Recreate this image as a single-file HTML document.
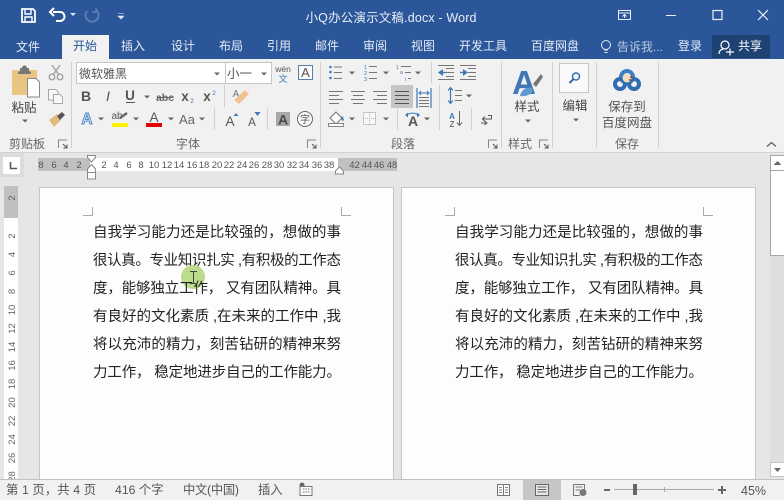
<!DOCTYPE html>
<html lang="zh-CN"><head><meta charset="utf-8"><title>Word</title>
<style>
html,body{margin:0;padding:0;width:784px;height:500px;overflow:hidden;background:#e6e6e6}
svg{display:block}
text{font-family:"Liberation Sans","Noto Sans CJK SC",sans-serif;fill:#444}
.cjk{font-size:12px;text-anchor:middle}
.tab{font-size:12px;text-anchor:middle;fill:#e6ecf5}
.doc{font-size:14.5px;fill:#222}
.hr{font-size:9.5px;text-anchor:middle;fill:#555}
.vr{font-size:9.5px;text-anchor:middle;fill:#666}
.st{font-size:12.3px;fill:#555}
.l{stroke:#777;stroke-width:1;fill:none}
.sep{stroke:#d0d0d0;stroke-width:1}
</style></head><body>
<svg xmlns="http://www.w3.org/2000/svg" width="784" height="500" viewBox="0 0 784 500">
<defs>
<path id="arrow" d="M-3 -1.500H3L0 1.500Z" fill="#666"/>
<g id="launch"><path d="M-4.500 4V-4H4" fill="none" stroke="#888"/><path d="M0 0L4 4M4 .5V4H.5" fill="none" stroke="#555"/></g>
</defs>
<!-- base -->
<rect width="784" height="500" fill="#e6e6e6"/>
<rect width="784" height="59" fill="#2b579a"/>
<rect y="59" width="784" height="93" fill="#f1f1f1"/>
<rect y="152" width="784" height="1" fill="#d2d2d2"/>

<!-- QAT -->
<g fill="none" stroke="#fff" stroke-width="1.800">
<path d="M22 9H33L35 11V22H22Z"/>
<path d="M25 9V14H31V9" stroke-width="1.400"/>
<path d="M25 22V17H32V22" stroke-width="1.400"/>
<path d="M53 12H60C66 12 66 21 60 21H56" stroke-width="2"/>
<path d="M54 8L50 12L54 16" stroke-width="2"/>
<path d="M96 10A6.500 6.500 0 1 1 87 11" stroke="#5f80b3" stroke-width="1.800"/>
<path d="M96 8V12H92" stroke="#5f80b3" stroke-width="1.400"/>
</g>
<path d="M70 13H76L73 16Z" fill="#dfe7f2"/>
<path d="M118 13.500H124M118 16H124L121 19Z" fill="#dfe7f2" stroke="#dfe7f2" stroke-width=".6"/>
<text x="391" y="22" font-size="12.500" text-anchor="middle" style="fill:#e9eef6" textLength="171">小Q办公演示文稿.docx - Word</text>

<!-- window controls -->
<g fill="none" stroke="#e9eef6" stroke-width="1">
<rect x="618.500" y="10.500" width="12" height="9"/><path d="M618.500 13H630.500M624.500 18V15M622.500 16.500L624.500 14.500L626.500 16.500"/>
<path d="M666 15.500H676"/>
<rect x="713" y="10.500" width="9" height="9" stroke-width="1.200"/>
<path d="M758 10L768 20M768 10L758 20" stroke-width="1.200"/>
</g>

<!-- tabs -->
<rect x="62" y="35" width="47" height="24" fill="#f1f1f1"/>
<text class="tab" x="28" y="51">文件</text>
<text class="tab" x="85" y="50" style="fill:#2b579a">开始</text>
<text class="tab" x="133" y="50">插入</text>
<text class="tab" x="183" y="50">设计</text>
<text class="tab" x="231" y="50">布局</text>
<text class="tab" x="279" y="50">引用</text>
<text class="tab" x="327" y="50">邮件</text>
<text class="tab" x="375" y="50">审阅</text>
<text class="tab" x="423" y="50">视图</text>
<text class="tab" x="483" y="50">开发工具</text>
<text class="tab" x="555" y="50">百度网盘</text>
<g fill="none" stroke="#dfe7f2" stroke-width="1"><circle cx="606" cy="45" r="4.500"/><path d="M604 50H608M604.500 52.500H607.500"/></g>
<text class="tab" x="640" y="51" style="fill:#b9c9df">告诉我...</text>
<text class="tab" x="690" y="50">登录</text>
<rect x="712" y="35" width="58" height="23" fill="#1e4273"/>
<g fill="none" stroke="#fff" stroke-width="1.200"><circle cx="725" cy="45" r="4"/><path d="M719 54C719 51 721 49.500 723 49M726 52H734M730 48.500V55.500"/></g>
<text class="tab" x="750" y="50" style="fill:#fff">共享</text>

<!-- group separators -->
<g class="sep">
<path d="M71.500 62V148M320.500 62V148M501.500 62V148M552.500 62V148M596.500 62V148M658.500 62V148"/>
<path d="M224.500 85V107M214.500 108V130M267.500 108V130M431.500 62V83M439.500 85V130M397.500 108V130M471.500 108V130"/>
</g>

<!-- clipboard -->
<rect x="12" y="70" width="25" height="25" rx="1" fill="#e9c583"/>
<path d="M20 71V68H22A2.500 2.500 0 0 1 27 68H29V71L31 72V74H18V72Z" fill="#777"/>
<path d="M27.500 78.500H36L39.500 82V97H27.500Z" fill="#fff" stroke="#888"/>
<text class="cjk" x="24" y="112" style="font-size:12.500px">粘贴</text>
<use href="#arrow" x="25" y="121"/>
<text class="cjk" x="27" y="148" style="fill:#666">剪贴板</text>
<use href="#launch" x="63" y="144"/>
<!-- scissors -->
<g fill="none" stroke="#a3a3a3" stroke-width="1.400"><circle cx="52" cy="77" r="2.800"/><circle cx="60" cy="77" r="2.800"/><path d="M53 75L60 65M59 75L52 65"/></g>
<!-- copy -->
<g fill="#f8f8f8" stroke="#a8a8a8"><path d="M48.500 89.500H56L58 92V100H48.500Z"/><path d="M53.500 94.500H60L62.500 97V103.500H53.500Z"/></g>
<!-- painter -->
<path d="M49 120L57 114L61 120L54 127Z" fill="#e0bb80"/>
<path d="M57 116L62 112L65 115L60 120Z" fill="#555"/>

<!-- font boxes -->
<rect x="76.500" y="62.500" width="149" height="21" fill="#fff" stroke="#c6c6c6"/>
<rect x="225.500" y="62.500" width="46" height="21" fill="#fff" stroke="#c6c6c6"/>
<text x="79" y="78" font-size="12" style="fill:#555">微软雅黑</text>
<use href="#arrow" x="217" y="74"/>
<text x="227" y="78" font-size="12.500" style="fill:#555">小一</text>
<use href="#arrow" x="264" y="74"/>
<text x="283" y="72" font-size="8.500" text-anchor="middle" style="fill:#555">wén</text>
<text x="283" y="82" font-size="9" text-anchor="middle" style="fill:#3f78b5">文</text>
<rect x="298.500" y="65.500" width="14" height="14" fill="#fbfbfb" stroke="#5b7ea8"/>
<text x="305.500" y="77" font-size="13" text-anchor="middle" style="fill:#555">A</text>

<!-- font row 2 -->
<text x="86" y="101" font-size="14" font-weight="700" text-anchor="middle" style="fill:#555">B</text>
<text x="108" y="101" font-size="14" font-style="italic" text-anchor="middle" style="fill:#555">I</text>
<text x="130" y="100" font-size="13.500" font-weight="700" text-anchor="middle" style="fill:#555">U</text>
<path d="M126 102.500H135" stroke="#555"/>
<use href="#arrow" x="147" y="97"/>
<text x="165" y="101" font-size="10.500" font-weight="700" text-anchor="middle" style="fill:#666">abc</text>
<path d="M157 97.500H173.500" stroke="#666"/>
<text x="185" y="101" font-size="13.500" font-weight="700" text-anchor="middle" style="fill:#555">x</text>
<text x="192" y="103" font-size="6.500" text-anchor="middle" style="fill:#3f78b5">2</text>
<text x="207" y="101" font-size="13.500" font-weight="700" text-anchor="middle" style="fill:#555">x</text>
<text x="214" y="95" font-size="6.500" text-anchor="middle" style="fill:#3f78b5">2</text>
<!-- eraser -->
<text x="236" y="97" font-size="10" text-anchor="middle" style="fill:#777">A</text>
<path d="M234 100L245 90L249 94L239 104Z" fill="#efc491"/>
<path d="M245 88L251 84L254 88L249 92Z" fill="#f6e8f1"/>

<!-- font row 3 -->
<text x="87" y="124" font-size="15.500" font-weight="700" text-anchor="middle" style="fill:#cfe0f3;stroke:#4f86c0;stroke-width:.9">A</text>
<use href="#arrow" x="101" y="119"/>
<text x="117" y="119" font-size="10" text-anchor="middle" style="fill:#555">ab</text>
<path d="M120 118L127 113" stroke="#666" stroke-width="2.500"/>
<rect x="112" y="123" width="16" height="4" fill="#fff200"/>
<use href="#arrow" x="136" y="119"/>
<text x="154" y="122" font-size="13.500" text-anchor="middle" style="fill:#555">A</text>
<rect x="146" y="123" width="16" height="4" fill="#e00000"/>
<use href="#arrow" x="171" y="119"/>
<text x="187" y="124" font-size="13" text-anchor="middle" style="fill:#666">Aa</text>
<use href="#arrow" x="202" y="119"/>
<text x="230" y="126" font-size="13.500" text-anchor="middle" style="fill:#555">A</text>
<path d="M233.500 116L236 113L238.500 116Z" fill="#3f78b5"/>
<text x="252" y="126" font-size="11.500" text-anchor="middle" style="fill:#555">A</text>
<path d="M254.500 112H260.500L257.500 116Z" fill="#3f78b5"/>
<rect x="276" y="112" width="14" height="14" fill="#a8a8a8"/>
<text x="283" y="124.500" font-size="14" font-weight="700" text-anchor="middle" style="fill:#4a4a4a">A</text>
<circle cx="305" cy="119" r="7.500" fill="#fbfbfb" stroke="#666"/>
<text x="305" y="123" font-size="10" text-anchor="middle" style="fill:#555">字</text>
<text class="cjk" x="188" y="148" style="fill:#666">字体</text>
<use href="#launch" x="312" y="144"/>

<!-- paragraph row 1 -->
<g fill="#3f78b5"><circle cx="330.500" cy="67" r="1.300"/><circle cx="330.500" cy="72" r="1.300"/><circle cx="330.500" cy="78" r="1.300"/></g>
<path d="M334 67H342M334 72.500H342M334 78.500H342" class="l"/>
<use href="#arrow" x="352" y="73"/>
<g font-size="5.500"><text x="364" y="69" style="fill:#3f78b5">1</text><text x="364" y="75" style="fill:#3f78b5">2</text><text x="364" y="81" style="fill:#3f78b5">3</text></g>
<path d="M369 66.500H377M369 72.500H377M369 78.500H377" class="l"/>
<use href="#arrow" x="386" y="73"/>
<g font-size="5"><text x="396" y="69" style="fill:#3f78b5">1</text><text x="400" y="74" style="fill:#3f78b5">a</text><text x="405" y="81" style="fill:#3f78b5">i</text></g>
<path d="M401 66.500H411M405 72.500H411M408 78.500H411" class="l"/>
<use href="#arrow" x="418" y="73"/>
<path d="M446 68.500H454M446 72.500H454M446 76.500H454M438 65.500H454M438 79.500H454" class="l"/>
<path d="M438 72.500L443 69V76Z" fill="#3f78b5"/><path d="M441 72.500H446" stroke="#3f78b5" stroke-width="1.400"/>
<path d="M468 68.500H476M468 72.500H476M468 76.500H476M460 65.500H476M460 79.500H476" class="l"/>
<path d="M468 72.500L463 69V76Z" fill="#3f78b5"/><path d="M460 72.500H465" stroke="#3f78b5" stroke-width="1.400"/>

<!-- paragraph row 2 -->
<rect x="391" y="85" width="22" height="23" fill="#c6c6c6"/>
<path d="M329 91.500H343M329 95.500H339M329 99.500H343M329 103.500H339" class="l"/>
<path d="M351 91.500H365M353 95.500H363M351 99.500H365M353 103.500H363" class="l"/>
<path d="M373 91.500H387M377 95.500H387M373 99.500H387M377 103.500H387" class="l"/>
<path d="M395 91.500H409M395 95.500H409M395 99.500H409M395 103.500H409" stroke="#555" fill="none"/>
<path d="M417 88V108M431 88V108" stroke="#3f78b5" stroke-width="1.200"/>
<path d="M419 93H429M421 91L419 93L421 95M427 91L429 93L427 95" stroke="#3f78b5" fill="none"/>
<path d="M419 97.500H429M419 100.500H429M419 103.500H429M419 106.500H429" class="l"/>
<path d="M450.500 88V103M448 90.500L450.500 87.500L453 90.500M448 100.500L450.500 103.500L453 100.500" stroke="#3f78b5" fill="none" stroke-width="1.200"/>
<path d="M455 90.500H462M455 95.500H462M455 100.500H462" class="l"/>
<use href="#arrow" x="469" y="96"/>

<!-- paragraph row 3 -->
<path d="M330 118L336 112L342 118L336 124Z" fill="#fbfbfb" stroke="#777"/>
<path d="M342 116C344 118 344 120 343 121C341 120 341 118 342 116Z" fill="#3f78b5"/>
<rect x="328.500" y="123.500" width="15" height="3" fill="#fbfbfb" stroke="#888"/>
<use href="#arrow" x="352" y="119"/>
<rect x="363.500" y="112.500" width="12" height="12" fill="#fafafa" stroke="#999" stroke-dasharray="1 1"/>
<path d="M369.500 112V125M363 118.500H376" stroke="#aaa" stroke-dasharray="1 1"/>
<use href="#arrow" x="386" y="119"/>
<text x="413" y="126" font-size="14" font-weight="700" text-anchor="middle" style="fill:#555">A</text>
<path d="M405 115L408 112.500V117.500ZM420 115L417 112.500V117.500Z" fill="#3f78b5"/>
<path d="M407 115C410 112.500 415 112.500 418 115" stroke="#3f78b5" fill="none"/>
<use href="#arrow" x="427" y="119"/>
<text x="452" y="119" font-size="8" font-weight="700" text-anchor="middle" style="fill:#3f78b5">A</text>
<text x="452" y="127" font-size="8" font-weight="700" text-anchor="middle" style="fill:#777">Z</text>
<path d="M459.500 111V125M457 122.500L459.500 125.500L462 122.500" stroke="#666" fill="none"/>
<path d="M488 115.500H491.500V119H482M485 116.500L482.500 119L485 121.500" stroke="#555" fill="none"/>
<path d="M481 123H486M484.500 121L487 123L484.500 125" stroke="#555" fill="none"/>
<text class="cjk" x="403" y="148" style="fill:#666">段落</text>
<use href="#launch" x="493" y="144"/>

<!-- styles -->
<text x="524" y="94" font-weight="700" text-anchor="middle" style="fill:#3f78b5;font-size:33px">A</text>
<path d="M533 84L541 74L543 77L536 87Z" fill="#777"/>
<path d="M520 96C521 90 527 86 532 88C534 92 529 97 520 96Z" fill="#5f9ad0"/>
<text class="cjk" x="527" y="111" style="font-size:12.500px">样式</text>
<use href="#arrow" x="528" y="121"/>
<text class="cjk" x="520" y="148" style="fill:#666">样式</text>
<use href="#launch" x="544" y="144"/>

<!-- edit -->
<rect x="559.500" y="63.500" width="29" height="29" fill="#fafafa" stroke="#c6c6c6"/>
<circle cx="576" cy="76.500" r="3.500" fill="none" stroke="#2f6db0" stroke-width="1.500"/>
<path d="M573.500 79L569.500 83" stroke="#2f6db0" stroke-width="2"/>
<text class="cjk" x="575" y="110" style="font-size:12.500px">编辑</text>
<use href="#arrow" x="576" y="120"/>

<!-- baidu -->
<g fill="none" stroke-width="4">
<circle cx="627" cy="77" r="6" stroke="#3e7ec2"/>
<circle cx="620" cy="84" r="5" stroke="#2f6db0"/>
<circle cx="634" cy="84" r="5" stroke="#2f6db0"/>
</g>
<circle cx="627" cy="78" r="4.500" fill="#ecdcc0"/><circle cx="630" cy="80" r="1" fill="#d42020"/><circle cx="631" cy="77" r="1" fill="#d42020"/>
<text class="cjk" x="627" y="111" style="font-size:12.500px;fill:#555">保存到</text>
<text class="cjk" x="627" y="127" style="font-size:12.500px;fill:#555">百度网盘</text>
<text class="cjk" x="627" y="148" style="fill:#666">保存</text>
<path d="M767 146.500L771.500 142.500L776 146.500" fill="none" stroke="#666" stroke-width="1.400"/>

<!-- ruler corner -->
<rect x="0" y="153" width="24" height="24" fill="#dcdcdc"/>
<rect x="3" y="157" width="17" height="17" fill="#fff"/>
<path d="M10.500 162V168.500H17" fill="none" stroke="#555" stroke-width="1.600"/>

<!-- horizontal ruler -->
<rect x="38" y="158" width="52" height="13" fill="#c0c0c0"/>
<rect x="90" y="158" width="248" height="13" fill="#fff"/>
<rect x="338" y="158" width="59" height="13" fill="#c0c0c0"/>
<g>
<text class="hr" x="41" y="168">8</text><text class="hr" x="54" y="168">6</text><text class="hr" x="66" y="168">4</text><text class="hr" x="79" y="168">2</text>
<text class="hr" x="104" y="168">2</text><text class="hr" x="116" y="168">4</text><text class="hr" x="129" y="168">6</text><text class="hr" x="141" y="168">8</text>
<text class="hr" x="154" y="168">10</text><text class="hr" x="167" y="168">12</text><text class="hr" x="179" y="168">14</text><text class="hr" x="192" y="168">16</text>
<text class="hr" x="204" y="168">18</text><text class="hr" x="217" y="168">20</text><text class="hr" x="229" y="168">22</text><text class="hr" x="242" y="168">24</text>
<text class="hr" x="254" y="168">26</text><text class="hr" x="267" y="168">28</text><text class="hr" x="279" y="168">30</text><text class="hr" x="292" y="168">32</text>
<text class="hr" x="304" y="168">34</text><text class="hr" x="317" y="168">36</text><text class="hr" x="329" y="168">38</text>
<text class="hr" x="354.500" y="168">42</text><text class="hr" x="367" y="168">44</text><text class="hr" x="379" y="168">46</text><text class="hr" x="392" y="168">48</text>
</g>
<!-- indent markers -->
<path d="M87.500 155.500H95.500V157.500L91.500 162L87.500 157.500Z" fill="#fff" stroke="#888"/>
<path d="M91.500 164.500L95.500 169V172.500H87.500V169Z" fill="#fff" stroke="#888"/>
<rect x="87.500" y="172.500" width="8" height="6.500" fill="#fff" stroke="#888"/>
<path d="M339.500 167L343.500 171V174H335.500V171Z" fill="#fff" stroke="#888"/>

<!-- vertical ruler -->
<rect x="4" y="186" width="14" height="32" fill="#c0c0c0"/>
<rect x="4" y="218" width="14" height="261" fill="#fff"/>
<g>
<text class="vr" transform="translate(15,198) rotate(-90)">2</text>
<text class="vr" transform="translate(15,236) rotate(-90)">2</text>
<text class="vr" transform="translate(15,254.500) rotate(-90)">4</text>
<text class="vr" transform="translate(15,273) rotate(-90)">6</text>
<text class="vr" transform="translate(15,291.500) rotate(-90)">8</text>
<text class="vr" transform="translate(15,310) rotate(-90)">10</text>
<text class="vr" transform="translate(15,328.500) rotate(-90)">12</text>
<text class="vr" transform="translate(15,347) rotate(-90)">14</text>
<text class="vr" transform="translate(15,365.500) rotate(-90)">16</text>
<text class="vr" transform="translate(15,384) rotate(-90)">18</text>
<text class="vr" transform="translate(15,402.500) rotate(-90)">20</text>
<text class="vr" transform="translate(15,421) rotate(-90)">22</text>
<text class="vr" transform="translate(15,439.500) rotate(-90)">24</text>
<text class="vr" transform="translate(15,458) rotate(-90)">26</text>
<text class="vr" transform="translate(15,476.500) rotate(-90)">28</text>
</g>

<!-- pages -->
<rect x="39.500" y="187.500" width="354" height="300" fill="#fdfdfd" stroke="#c6c6c6"/>
<rect x="401.500" y="187.500" width="354" height="300" fill="#fdfdfd" stroke="#c6c6c6"/>
<path d="M83 215.500H92.500V207M341.500 207V215.500H351" fill="none" stroke="#aaa"/>
<path d="M445 215.500H454.500V207M703.500 207V215.500H713" fill="none" stroke="#aaa"/>

<!-- highlight cursor -->
<circle cx="193" cy="277" r="12" fill="#b6d77f" opacity=".9"/>

<!-- page 1 text -->
<text class="doc" x="93" y="237" textLength="248">自我学习能力还是比较强的，想做的事</text>
<text class="doc" x="93" y="265" textLength="248">很认真。专业知识扎实 ,有积极的工作态</text>
<text class="doc" x="93" y="293" textLength="248">度，能够独立工作， 又有团队精神。具</text>
<text class="doc" x="93" y="321" textLength="248">有良好的文化素质 ,在未来的工作中 ,我</text>
<text class="doc" x="93" y="349" textLength="248">将以充沛的精力，刻苦钻研的精神来努</text>
<text class="doc" x="93" y="377" textLength="248">力工作， 稳定地进步自己的工作能力。</text>
<path d="M190 271.500H197M193.500 271.500V283.500M190 283.500H197" stroke="#444" fill="none"/>

<!-- page 2 text -->
<text class="doc" x="455" y="237" textLength="248">自我学习能力还是比较强的，想做的事</text>
<text class="doc" x="455" y="265" textLength="248">很认真。专业知识扎实 ,有积极的工作态</text>
<text class="doc" x="455" y="293" textLength="248">度，能够独立工作， 又有团队精神。具</text>
<text class="doc" x="455" y="321" textLength="248">有良好的文化素质 ,在未来的工作中 ,我</text>
<text class="doc" x="455" y="349" textLength="248">将以充沛的精力，刻苦钻研的精神来努</text>
<text class="doc" x="455" y="377" textLength="248">力工作， 稳定地进步自己的工作能力。</text>

<!-- scrollbar -->
<rect x="770" y="155" width="14" height="322" fill="#dedede"/>
<rect x="770.500" y="155.500" width="14" height="15" fill="#fff" stroke="#a6a6a6"/>
<path d="M773.500 165L777.500 161L781.500 165Z" fill="#666"/>
<rect x="770.500" y="170.500" width="14" height="85" fill="#fff" stroke="#a6a6a6"/>
<rect x="770.500" y="462.500" width="14" height="14" fill="#fff" stroke="#c6c6c6"/>
<path d="M774 468H781L777.500 472Z" fill="#666"/>

<!-- status bar -->
<rect y="479" width="784" height="21" fill="#f1f1f1"/>
<rect y="479" width="784" height="1" fill="#c0c0c0"/>
<text class="st" x="6" y="494" textLength="90">第 1 页，共 4 页</text>
<text class="st" x="115" y="494">416 个字</text>
<text class="st" x="183" y="494" textLength="56">中文(中国)</text>
<text class="st" x="258" y="494">插入</text>
<g>
<circle cx="302" cy="485" r="2.500" fill="#666"/>
<path d="M300 486.500H312V495.500H300Z" fill="#fbfbfb" stroke="#777"/>
<path d="M303 489H310M303 492H310" stroke="#777" stroke-dasharray="1.500 1"/>
</g>
<path d="M497.500 484.500H503.500V495.500H497.500ZM503.500 484.500H509.500V495.500H503.500Z" fill="#fbfbfb" stroke="#777"/>
<path d="M499 487.500H502M499 490H502M499 492.500H502M505 487.500H508M505 490H508M505 492.500H508" stroke="#888"/>
<rect x="523" y="480" width="38" height="20" fill="#c6c6c6"/>
<rect x="535.500" y="484.500" width="13" height="11" fill="#e8e8e8" stroke="#666"/>
<path d="M537.500 487H546.500M537.500 489.500H546.500M537.500 492H546.500" stroke="#666"/>
<path d="M573.500 484.500H584.500V491" fill="none" stroke="#777"/>
<path d="M573.500 484.500V495.500H580M575.500 487H582.500M575.500 490H580" fill="none" stroke="#777"/>
<circle cx="583" cy="492.500" r="3.500" fill="#777"/>
<path d="M604 490H610" stroke="#666" stroke-width="2"/>
<path d="M614 489.500H714" stroke="#aaa"/>
<path d="M664.500 487V492" stroke="#aaa"/>
<rect x="633" y="484" width="4" height="11" fill="#666"/>
<path d="M718 490H726M722 486V494" stroke="#666" stroke-width="2"/>
<text x="741" y="495" font-size="12.500" style="fill:#555">45%</text>
</svg>
</body></html>
